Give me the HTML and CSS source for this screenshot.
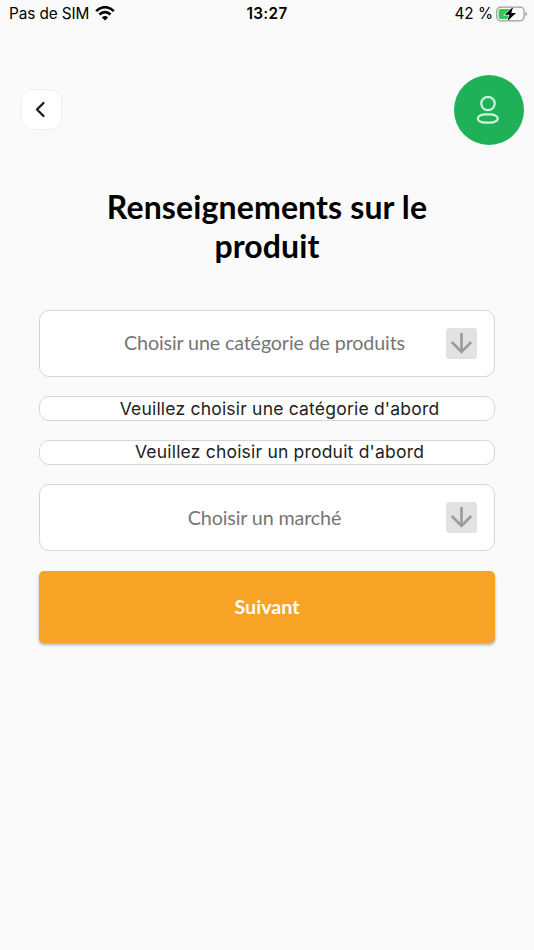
FILE: index.html
```html
<!DOCTYPE html>
<html lang="fr">
<head>
<meta charset="utf-8">
<title>Renseignements sur le produit</title>
<link rel="stylesheet" href="styles.css">
</head>
<body>
<header class="status">
  <div class="status-left"><span class="carrier">Pas de SIM</span>
    <svg class="wifi" width="20" height="15" viewBox="0 0 20 15" fill="none" stroke="#000" stroke-width="2.7"><path d="M1.2 5.2C6-.1 14 -.1 18.8 5.2M4.5 8.5C7.5 5.3 12.5 5.3 15.5 8.5"/><path d="M10 14.6 6.9 11.4Q10 8.6 13.1 11.4Z" fill="#000" stroke="none"/></svg>
  </div>
  <time class="clock">13:27</time>
  <div class="status-right"><span class="percent">42 %</span>
    <svg class="battery" width="32" height="16" viewBox="0 0 32 16"><rect x=".7" y="1.2" width="27.4" height="13.6" rx="4" fill="#fafafa" stroke="#999" stroke-width="1.2"/><path d="M4.8 3H14v10H4.8A2 2 0 0 1 2.6 11V5A2 2 0 0 1 4.8 3Z" fill="#32c85a"/><path d="M29.5 5.5q3 2.5 0 5Z" fill="#999"/><path d="M17.3 .8 8.7 8.8h4.7L11.4 15.2l8.6-8.3h-4.8Z" fill="#000" stroke="#fafafa" stroke-width="1.2" paint-order="stroke"/></svg>
  </div>
</header>
<nav class="topbar">
  <button class="back" aria-label="Retour"><svg width="39" height="39" viewBox="0 0 39 39" fill="none" stroke="#141b2b" stroke-width="2.3" stroke-linecap="round" stroke-linejoin="round"><path d="M21.5 13 15 19.5 21.5 26"/></svg></button>
  <button class="profile" aria-label="Profil"><svg width="70" height="70" viewBox="0 0 70 70" fill="none" stroke="#cdf3da" stroke-width="2.2"><circle cx="34" cy="28.5" r="6.7"/><rect x="23.8" y="39.3" width="20" height="8.4" rx="8" ry="4.2"/></svg></button>
</nav>
<main class="content">
  <h1 class="title"><span class="line-one">Renseignements sur le</span><br><span class="line-two">produit</span></h1>
  <div class="form">
    <button class="select"><span class="label label-category">Choisir une catégorie de produits</span><span class="arrow"><svg width="31" height="31" viewBox="0 0 31 31" fill="none" stroke="#9b9b9b" stroke-width="2.6"><path d="M15.5 5v19.5M5.8 14l9.7 9.9 9.7-9.9"/></svg></span></button>
    <div class="hint"><span class="hint-category">Veuillez choisir une catégorie d'abord</span></div>
    <div class="hint"><span class="hint-product">Veuillez choisir un produit d'abord</span></div>
    <button class="select"><span class="label label-market">Choisir un marché</span><span class="arrow"><svg width="31" height="31" viewBox="0 0 31 31" fill="none" stroke="#9b9b9b" stroke-width="2.6"><path d="M15.5 5v19.5M5.8 14l9.7 9.9 9.7-9.9"/></svg></span></button>
    <button class="next"><span>Suivant</span></button>
  </div>
</main>
</body>
</html>
```
FILE: styles.css
```css
* { box-sizing: border-box; }
body { margin: 0; height: 950px; overflow: hidden; background: #fafafa; color: #000; font-family: Inter, "Liberation Sans", sans-serif; }
button { appearance: none; border: 0; padding: 0; font: inherit; }
svg { display: block; flex: none; }
.status { display: grid; grid-template-columns: 1fr auto 1fr; align-items: center; height: 28px; padding: 0 6px 0 9px; font-size: 15.3px; line-height: 20px; white-space: nowrap; }
.status-left, .status-right { display: flex; align-items: center; gap: 6px; }
.wifi { margin-top: -2px; }
.carrier { letter-spacing: -.08px; }
.status-right { justify-content: flex-end; gap: 3px; }
.battery { margin-top: -1px; }
.clock { margin-right: 3px; font-weight: 600; letter-spacing: .35px; }
.topbar { display: flex; align-items: center; justify-content: space-between; height: 70px; margin-top: 47px; padding: 0 10.5px 0 21px; }
.back { width: 41px; height: 41px; margin-bottom: .5px; background: #fff; border: 1px solid #ededf4; border-radius: 12px; }
.profile { width: 70px; height: 70px; border-radius: 50%; background: #1eb158; }
.content { padding: 42px 39px 0; }
.title { margin: 0; text-align: center; font: 700 32px/39px Lato, sans-serif; letter-spacing: .13px; }
.form { display: flex; flex-direction: column; gap: 19.7px; margin-top: 45px; }
.select { display: flex; align-items: center; height: 66.8px; padding: 0 17px 0 43px; background: #fff; border: 1.3px solid #d6d6d6; border-radius: 10px; }
.label { flex: 1; text-align: center; color: #757575; font: 400 19.7px/24px Lato, sans-serif; letter-spacing: -.13px; white-space: nowrap; }
.arrow { width: 31px; height: 31px; background: #e2e2e2; border-radius: 3px; }
.hint { display: flex; align-items: center; justify-content: center; height: 24.2px; padding-left: 25px; background: #fff; border: 1.3px solid #d6d6d6; border-radius: 10px; color: #222; font-size: 17.5px; line-height: 22px; letter-spacing: .2px; white-space: nowrap; }
.next { height: 72px; color: #fff; background: #f7a325; border-radius: 5px; box-shadow: 0 2px 3px rgba(0,0,0,.3); font: 700 19.7px/24px Lato, sans-serif; }
```
